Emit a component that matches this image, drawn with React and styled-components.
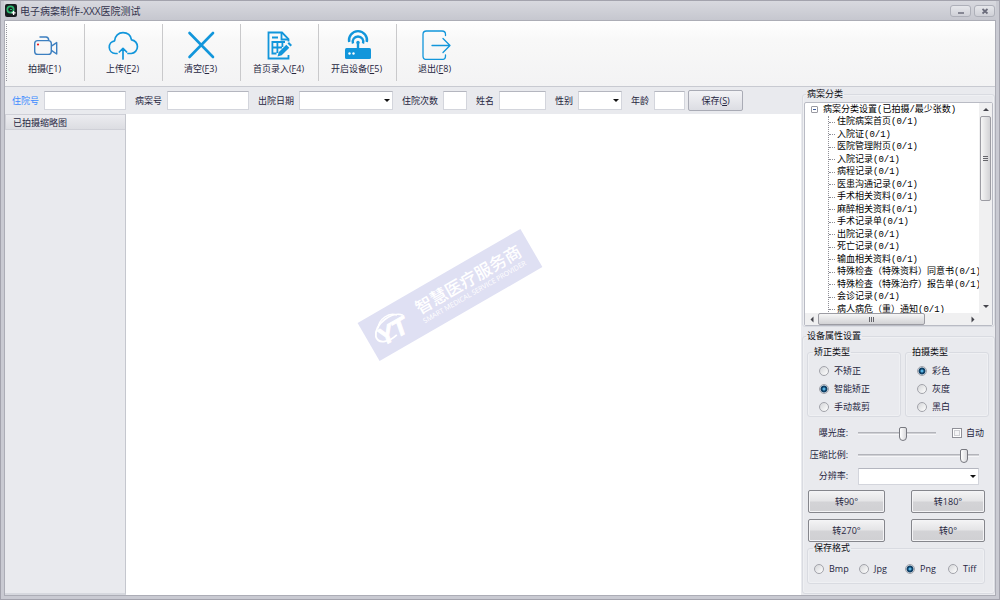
import React, { useState } from "react";
import styled, { createGlobalStyle, css } from "styled-components";

const GlobalStyle = createGlobalStyle`
  * {
    box-sizing: border-box;
  }
  body {
    margin: 0;
    background: #c9cad2;
    color: #26263f;
    font: 9px/12px "Open Sans", "Noto Sans CJK SC", sans-serif;
  }
  button, input, select {
    font: inherit;
    color: inherit;
    margin: 0;
  }
`;

const Window = styled.div`
  display: flex;
  flex-direction: column;
  min-height: 100vh;
  padding: 0 3px 3px;
  background: #c9cad2;
  border: 1px solid #a3a3ad;
`;

const TitleBar = styled.header`
  display: flex;
  align-items: center;
  gap: 3px;
  height: 19px;
  padding: 0 1px;
  background: linear-gradient(#d8d9df, #c6c7cf);

  h1 {
    flex: 1;
    margin: 0;
    font-size: 10px;
    font-weight: 400;
    line-height: 14px;
    color: #33334d;
  }
`;

const WindowButton = styled.button`
  display: flex;
  align-items: center;
  justify-content: center;
  width: 21px;
  height: 12px;
  padding: 0;
  background: linear-gradient(#e6e7eb, #cfd0d7);
  border: 1px solid #aeb0b9;
  border-radius: 3px;
`;

const Body = styled.div`
  flex: 1;
  display: flex;
  flex-direction: column;
  border: 1px solid #acadb6;
  background: #e9eaee;
`;

const Toolbar = styled.nav`
  display: flex;
  height: 66px;
  padding: 3px 2px 5px 0;
  background: linear-gradient(#ffffff, #f8f8f8 30%, #f3f3f4);
  border-bottom: 1px solid #c8cad1;
`;

const Grip = styled.span`
  width: 2px;
  border-right: 1px dotted #94949c;
`;

const Tool = styled.button`
  display: flex;
  flex-direction: column;
  align-items: center;
  justify-content: space-between;
  width: 78px;
  padding: 4px 2px 6px 0;
  background: none;
  border: 0;
  border-right: 1px solid #c9c9cb;
  line-height: 12px;
  white-space: nowrap;

  &:last-child {
    border-color: transparent;
  }
  svg {
    width: 32px;
    height: 32px;
  }
`;

const Workspace = styled.div`
  flex: 1;
  display: grid;
  grid-template-columns: minmax(0, 1fr) 194px;
`;

const LeftSide = styled.div`
  display: flex;
  flex-direction: column;
`;

const PatientForm = styled.form`
  display: flex;
  align-items: center;
  gap: 9px;
  height: 27px;
  padding: 0 7px;
`;

const Field = styled.div`
  display: flex;
  align-items: center;
  gap: 5px;
  white-space: nowrap;

  label {
    color: ${(props) => (props.$active ? "#3d8bff" : "inherit")};
  }
`;

const box = css`
  width: ${(props) => (props.$width ? `${props.$width}px` : "100%")};
  height: 19px;
  padding: 0 2px;
  background: #fff;
  border: 1px solid #d3d5dc;
  border-top-color: #b4b6bf;
  border-radius: 0;
  outline: none;
`;

const TextInput = styled.input`
  ${box}
`;

const SelectWrap = styled.span`
  display: grid;
  align-items: center;

  select {
    ${box}
    grid-area: 1 / 1;
    appearance: none;
    height: ${(props) => props.$height || 19}px;
  }
  &::after {
    content: "";
    grid-area: 1 / 1;
    justify-self: end;
    margin-right: 3px;
    border: 3px solid transparent;
    border-top: 3px solid #111;
    border-bottom: 0;
    pointer-events: none;
  }
`;

const SaveButton = styled.button`
  width: 55px;
  height: 21px;
  margin-left: -6px;
  padding: 0;
  background: linear-gradient(#f3f3f6, #dcdde3);
  border: 1px solid #a9abb5;
  border-radius: 2px;
`;

const Stage = styled.div`
  flex: 1;
  display: grid;
  grid-template-columns: 121px minmax(0, 1fr);
  background: #fff;
`;

const Thumbnails = styled.aside`
  background: #e9eaee;
  border-right: 1px solid #c5c7ce;
  border-bottom: 2px solid #d6d8de;

  h2 {
    height: 16px;
    margin: 0;
    padding-left: 7px;
    font-size: 9px;
    font-weight: 400;
    line-height: 15px;
    background: linear-gradient(#ececf0, #dcdde2);
    border: 1px solid #cfd0d7;
    border-right: 0;
  }
`;

const Preview = styled.main`
  display: flex;
  align-items: flex-start;
  justify-content: center;
  padding: 159px 27px 0 0;
`;

const Watermark = styled.div`
  display: flex;
  align-items: center;
  gap: 12px;
  width: 188px;
  height: 44px;
  padding-left: 6px;
  background: #dfe0f3;
  color: #fff;
  transform: rotate(-30deg);
  white-space: nowrap;

  svg {
    flex: none;
    width: 40px;
    height: 36px;
  }
  strong {
    display: block;
    font-size: 17px;
    font-weight: 500;
    line-height: 20px;
  }
  small {
    display: block;
    font-size: 7px;
    font-weight: 400;
    line-height: 8px;
  }
`;

const Sidebar = styled.aside`
  display: flex;
  flex-direction: column;
  gap: 3px;
  padding: 1px 0 1px 1px;
`;

const Group = styled.fieldset`
  min-width: 0;
  margin: 0;
  padding: ${(props) => props.$padding || "0"};
  border: 1px solid #d9dbe1;
  border-radius: 3px;
  box-shadow: inset 0 0 0 1px #eff0f3;

  & > legend {
    margin-left: ${(props) => props.$indent || 0}px;
    padding: 0 1px;
    line-height: 12px;
    color: #0d0d12;
  }
`;

const TreeBox = styled.div`
  display: grid;
  grid-template: 210px 12px / minmax(0, 1fr) 13px;
  background: #fff;
  border: 1px solid #b9bbc4;
  border-radius: 2px;
`;

const Tree = styled.div`
  overflow: hidden;
  padding: 0 0 0 6px;
  font-family: "Liberation Mono", "Noto Sans CJK SC", monospace;
  color: #000;
  white-space: nowrap;
`;

const TreeRoot = styled.div`
  display: flex;
  align-items: center;
  gap: 5px;
  height: 13px;

  span {
    display: flex;
    align-items: center;
    justify-content: center;
    width: 7px;
    height: 7px;
    border: 1px solid #9a9aa2;
    border-radius: 1px;
  }
  span::before {
    content: "";
    width: 3px;
    height: 1px;
    background: #3a5a9a;
  }
`;

const TreeList = styled.ul`
  display: flex;
  flex-direction: column;
  height: 200px;
  margin: 0 0 0 17px;
  padding: 0;
  list-style: none;
  border-left: 1px dotted #8e8e96;

  li {
    flex: 1;
    display: flex;
    align-items: center;
    gap: 2px;
  }
  li::before {
    content: "";
    flex: none;
    width: 6px;
    border-top: 1px dotted #8e8e96;
  }
`;

const ScrollTrack = styled.div`
  display: flex;
  flex-direction: ${(props) => (props.$vertical ? "column" : "row")};
  align-items: center;
  background: #f0f0f1;
`;

const ScrollArrow = styled.span`
  display: flex;
  align-items: center;
  justify-content: center;
  width: 13px;
  height: 13px;

  &::before {
    content: "";
    border: 3px solid transparent;
    border-width: 0 3px 3px;
    border-bottom-color: #44444c;
    transform: rotate(${(props) => props.$turn || 0}deg);
  }
`;

const ScrollThumb = styled.span`
  display: flex;
  align-items: center;
  justify-content: center;
  width: ${(props) => (props.$vertical ? "11px" : "107px")};
  height: ${(props) => (props.$vertical ? "85px" : "12px")};
  margin-${(props) => (props.$vertical ? "bottom" : "right")}: auto;
  background: linear-gradient(${(props) => (props.$vertical ? "90deg" : "180deg")}, #f6f6f6, #d2d2d5);
  border: 1px solid #9c9ca3;
  border-radius: 2px;

  &::before {
    content: "";
    width: 5px;
    height: 5px;
    background: repeating-linear-gradient(
      ${(props) => (props.$vertical ? "180deg" : "90deg")},
      #66666c 0 1px,
      transparent 1px 2px
    );
  }
`;

const Settings = styled(Group)`
  flex: 1;
`;

const TypeGroups = styled.div`
  display: grid;
  grid-template-columns: 94px 84px;
  gap: 4px;
`;

const RadioLabel = styled.label`
  display: flex;
  align-items: center;
  gap: 5px;
  height: 18px;
  white-space: nowrap;
`;

const Radio = styled.input.attrs({ type: "radio" })`
  appearance: none;
  flex: none;
  width: 10px;
  height: 10px;
  border: 1px solid #a2a3aa;
  border-radius: 50%;
  background: linear-gradient(135deg, #d4d5d8, #fff);

  &:checked {
    background: radial-gradient(circle at 4px 4px, #58b4e4 1px, #0d3f66 2px, #0d3f66 3px, #f0f1f4 4px);
  }
`;

const Controls = styled.div`
  display: grid;
  grid-template-columns: 41px 78px 1fr;
  grid-template-rows: 22px 22px 20px;
  column-gap: 10px;
  align-items: center;
  padding: 5px 11px 0 0;

  & > label {
    justify-self: end;
    white-space: nowrap;
  }
  & > .wide {
    grid-column: 2 / 4;
  }
`;

const Slider = styled.input.attrs({ type: "range" })`
  appearance: none;
  width: 100%;
  height: 16px;
  background: none;

  &::-webkit-slider-runnable-track {
    height: 3px;
    background: #d0d1d5;
    border-top: 1px solid #b3b4ba;
    border-bottom: 1px solid #f6f6f8;
  }
  &::-webkit-slider-thumb {
    appearance: none;
    width: 8px;
    height: 14px;
    margin-top: -6px;
    background: linear-gradient(90deg, #fff, #d9d9dc);
    border: 1px solid #77787f;
    border-radius: 2px 2px 4px 4px;
  }
`;

const AutoLabel = styled.label`
  display: flex;
  align-items: center;
  gap: 4px;
  margin-right: -5px;
`;

const Checkbox = styled.input.attrs({ type: "checkbox" })`
  appearance: none;
  width: 10px;
  height: 10px;
  border: 1px solid #8f9098;
  background: #f4f4f6;
  box-shadow: inset 0 0 0 1px #fff, inset 0 0 0 2px #cfd0d4;

  &:checked {
    background: #2a6a9a;
  }
`;

const RotateGrid = styled.div`
  display: grid;
  grid-template-columns: 77px 74px;
  justify-content: space-between;
  gap: 6px;
  padding: 4px 5px 0 1px;
`;

const RotateButton = styled.button`
  height: 23px;
  padding: 0;
  background: linear-gradient(#f4f4f5, #e4e4e6 48%, #d3d3d6 52%, #d0d0d3);
  border: 1px solid #85868c;
  border-radius: 2px;
  box-shadow: inset 0 0 0 1px #f4f4f6;
`;

const FormatGroup = styled(Group)`
  margin-right: 5px;
`;

const FormatRow = styled.div`
  display: grid;
  grid-template-columns: 45px 46px 43px 1fr;
  padding: 6px 0 5px 6px;
`;

const blue = "#1296db";

const AppIcon = () => (
  <svg width="12" height="13" viewBox="0 0 12 13">
    <rect width="12" height="13" rx="2" fill="#181c1f" />
    <circle cx="5.5" cy="5.5" r="3.2" fill="none" stroke="#29b56d" strokeWidth="1.7" />
    <path d="M5 5.5h2" stroke="#29b56d" strokeWidth="1" />
    <path d="M6.6 8.9h4M8.6 6.9v4" stroke="#fff" strokeWidth="1.3" />
  </svg>
);

const CameraIcon = () => (
  <svg viewBox="0 0 32 32" fill="none" stroke="#3c7fc0" strokeWidth="1.4" strokeLinejoin="round">
    <rect x="5.7" y="12.6" width="16.6" height="13.8" rx="3" />
    <path d="M10.500 9h6.500q2.500 0 2.800 3.400M22.400 18.200l5.300-3.600v11.400l-5.300-3.600" />
    <circle cx="9" cy="16.500" r="1.100" fill="#f01818" stroke="none" />
  </svg>
);

const CloudIcon = () => (
  <svg viewBox="0 0 32 32" fill="none" stroke={blue} strokeWidth="1.7" strokeLinecap="round" strokeLinejoin="round">
    <path d="M10 25.5H8.3a6.4 6.4 0 0 1-.7-12.7C8 8 11.5 4.7 16 4.7c4.4 0 7.7 2.8 8.5 7.1a6.9 6.9 0 0 1-.3 13.7H21" />
    <path d="M16 31V20.5M12.3 24l3.700-3.700 3.700 3.700" />
  </svg>
);

const ClearIcon = () => (
  <svg viewBox="0 0 32 32" stroke={blue} strokeWidth="2.6" strokeLinecap="round">
    <path d="M4.5 5l23.5 24M28 5L4.5 29" />
  </svg>
);

const FormIcon = () => (
  <svg viewBox="0 0 32 32" fill="none" stroke={blue} strokeWidth="1.8">
    <path d="M25.5 13.5V11l-6.5-6.5H5.500v26H25.500V27" />
    <path d="M18.5 4.500V11.500H25.500M9 9.500h6M8.500 14h13.500M8.500 19.500h10.500M8.500 25.500h5M9.400 14v12M14.400 14v11M19.400 14v5" />
    <path d="M14.500 28.500l1.200-4.200 7.600-7.600 3 3-7.600 7.600zM24.500 15.500l1.500-1.500 3 3-1.500 1.500z" fill={blue} stroke="none" />
  </svg>
);

const RouterIcon = () => (
  <svg viewBox="0 0 32 32" fill="none" stroke={blue} strokeWidth="2.4">
    <path d="M8.200 14a9 9 0 1 1 17.600 0M12 15.500a5.300 5.300 0 1 1 10 0" />
    <circle cx="17" cy="14.500" r="1.700" fill={blue} stroke="none" />
    <path d="M17 15v6" />
    <rect x="4" y="20" width="26" height="11" rx="1.500" fill={blue} stroke="none" />
    <circle cx="8.500" cy="25.500" r="1.200" fill="#fff" stroke="none" />
    <circle cx="12.500" cy="25.500" r="1.200" fill="#fff" stroke="none" />
  </svg>
);

const ExitIcon = () => (
  <svg viewBox="0 0 32 32" fill="none" stroke={blue} strokeWidth="1.3" strokeLinecap="round" strokeLinejoin="round">
    <path d="M26.500 7.500V6.500q0-3.500-3.500-3.500H7.500Q4 3 4 6.500v21.500q0 3.500 3.500 3.500H23q3.500 0 3.500-3.500V27" />
    <path d="M13 17.500h18M24 10.500l7 7-7 7" />
  </svg>
);

const BrandLogo = () => (
  <svg viewBox="0 0 40 36">
    <g fill="none" stroke="#fff">
      <path d="M37 12C31 3 8 5 3 17c-2 9 10 11 19 9" strokeWidth="1.8" />
      <path d="M9 11C14 3 27 2 32 9" strokeWidth="1.4" />
    </g>
    <text x="5" y="29" fill="#fff" stroke="#fff" strokeWidth="1" fontFamily="Liberation Sans" fontSize="24" fontWeight="700" fontStyle="italic">
      YT
    </text>
  </svg>
);

const tools = [
  { name: "拍摄", hotkey: "F", number: 1, icon: <CameraIcon /> },
  { name: "上传", hotkey: "F", number: 2, icon: <CloudIcon /> },
  { name: "清空", hotkey: "F", number: 3, icon: <ClearIcon /> },
  { name: "首页录入", hotkey: "F", number: 4, icon: <FormIcon /> },
  { name: "开启设备", hotkey: "F", number: 5, icon: <RouterIcon /> },
  { name: "退出", hotkey: "F", number: 8, icon: <ExitIcon /> },
];

const records = [
  "住院病案首页",
  "入院证",
  "医院管理附页",
  "入院记录",
  "病程记录",
  "医患沟通记录",
  "手术相关资料",
  "麻醉相关资料",
  "手术记录单",
  "出院记录",
  "死亡记录",
  "输血相关资料",
  "特殊检查（特殊资料）同意书",
  "特殊检查（特殊治疗）报告单",
  "会诊记录",
  "病人病危（重）通知",
];

const RadioList = ({ name, options, value, onChange }) =>
  options.map((option) => (
    <RadioLabel key={option}>
      <Radio name={name} checked={value === option} onChange={() => onChange(option)} />
      {option}
    </RadioLabel>
  ));

const App = () => {
  const [correction, setCorrection] = useState("智能矫正");
  const [color, setColor] = useState("彩色");
  const [format, setFormat] = useState("Png");

  return (
    <Window>
      <GlobalStyle />
      <TitleBar>
        <AppIcon />
        <h1>电子病案制作-XXX医院测试</h1>
        <WindowButton aria-label="最小化">
          <svg width="8" height="8" viewBox="0 0 8 8">
            <path d="M1 6h6" stroke="#6b6c7b" strokeWidth="1.5" />
          </svg>
        </WindowButton>
        <WindowButton aria-label="关闭">
          <svg width="8" height="8" viewBox="0 0 8 8">
            <path d="M1.5 2l5 4.5M6.5 2l-5 4.5" stroke="#6b6c7b" strokeWidth="1.7" />
          </svg>
        </WindowButton>
      </TitleBar>

      <Body>
        <Toolbar>
          <Grip />
          {tools.map((tool) => (
            <Tool key={tool.name}>
              {tool.icon}
              <span>
                {tool.name}(<u>{tool.hotkey}</u>
                {tool.number})
              </span>
            </Tool>
          ))}
        </Toolbar>

        <Workspace>
          <LeftSide>
            <PatientForm onSubmit={(e) => e.preventDefault()}>
              <Field $active>
                <label htmlFor="admission">住院号</label>
                <TextInput id="admission" $width={82} />
              </Field>
              <Field>
                <label htmlFor="caseNo">病案号</label>
                <TextInput id="caseNo" $width={82} />
              </Field>
              <Field>
                <label htmlFor="leaveDate">出院日期</label>
                <SelectWrap $width={94}>
                  <select id="leaveDate" />
                </SelectWrap>
              </Field>
              <Field>
                <label htmlFor="times">住院次数</label>
                <TextInput id="times" $width={24} />
              </Field>
              <Field>
                <label htmlFor="name">姓名</label>
                <TextInput id="name" $width={47} />
              </Field>
              <Field>
                <label htmlFor="gender">性别</label>
                <SelectWrap $width={44}>
                  <select id="gender" />
                </SelectWrap>
              </Field>
              <Field>
                <label htmlFor="age">年龄</label>
                <TextInput id="age" $width={31} />
              </Field>
              <SaveButton type="submit">
                保存(<u>S</u>)
              </SaveButton>
            </PatientForm>

            <Stage>
              <Thumbnails>
                <h2>已拍摄缩略图</h2>
              </Thumbnails>
              <Preview>
                <Watermark>
                  <BrandLogo />
                  <div>
                    <strong>智慧医疗服务商</strong>
                    <small>SMART MEDICAL SERVICE PROVIDER</small>
                  </div>
                </Watermark>
              </Preview>
            </Stage>
          </LeftSide>

          <Sidebar>
            <Group $padding="2px 1px 0 1px" $indent={2}>
              <legend>病案分类</legend>
              <TreeBox>
                <Tree>
                  <TreeRoot>
                    <span />
                    病案分类设置(已拍摄/最少张数)
                  </TreeRoot>
                  <TreeList>
                    {records.map((record) => (
                      <li key={record}>{record}(0/1)</li>
                    ))}
                  </TreeList>
                </Tree>
                <ScrollTrack $vertical>
                  <ScrollArrow />
                  <ScrollThumb $vertical />
                  <ScrollArrow $turn={180} />
                </ScrollTrack>
                <ScrollTrack>
                  <ScrollArrow $turn={-90} />
                  <ScrollThumb />
                  <ScrollArrow $turn={90} />
                </ScrollTrack>
                <ScrollTrack />
              </TreeBox>
            </Group>

            <Settings $padding="4px 4px 0 4px" $indent={-1}>
              <legend>设备属性设置</legend>
              <TypeGroups>
                <Group $indent={-6} $padding="4px 0 0 11px">
                  <legend>矫正类型</legend>
                  <RadioList
                    name="correction"
                    options={["不矫正", "智能矫正", "手动裁剪"]}
                    value={correction}
                    onChange={setCorrection}
                  />
                </Group>
                <Group $indent={-6} $padding="4px 0 0 11px">
                  <legend>拍摄类型</legend>
                  <RadioList name="color" options={["彩色", "灰度", "黑白"]} value={color} onChange={setColor} />
                </Group>
              </TypeGroups>

              <Controls>
                <label htmlFor="exposure">曝光度:</label>
                <Slider id="exposure" defaultValue={59} />
                <AutoLabel>
                  <Checkbox />
                  自动
                </AutoLabel>
                <label htmlFor="compress">压缩比例:</label>
                <Slider id="compress" className="wide" defaultValue={90} />
                <label htmlFor="resolution">分辨率:</label>
                <SelectWrap className="wide" $height={17}>
                  <select id="resolution" />
                </SelectWrap>
              </Controls>

              <RotateGrid>
                <RotateButton>转90°</RotateButton>
                <RotateButton>转180°</RotateButton>
                <RotateButton>转270°</RotateButton>
                <RotateButton>转0°</RotateButton>
              </RotateGrid>

              <FormatGroup $indent={5}>
                <legend>保存格式</legend>
                <FormatRow>
                  <RadioList name="format" options={["Bmp", "Jpg", "Png", "Tiff"]} value={format} onChange={setFormat} />
                </FormatRow>
              </FormatGroup>
            </Settings>
          </Sidebar>
        </Workspace>
      </Body>
    </Window>
  );
};

export default App;
